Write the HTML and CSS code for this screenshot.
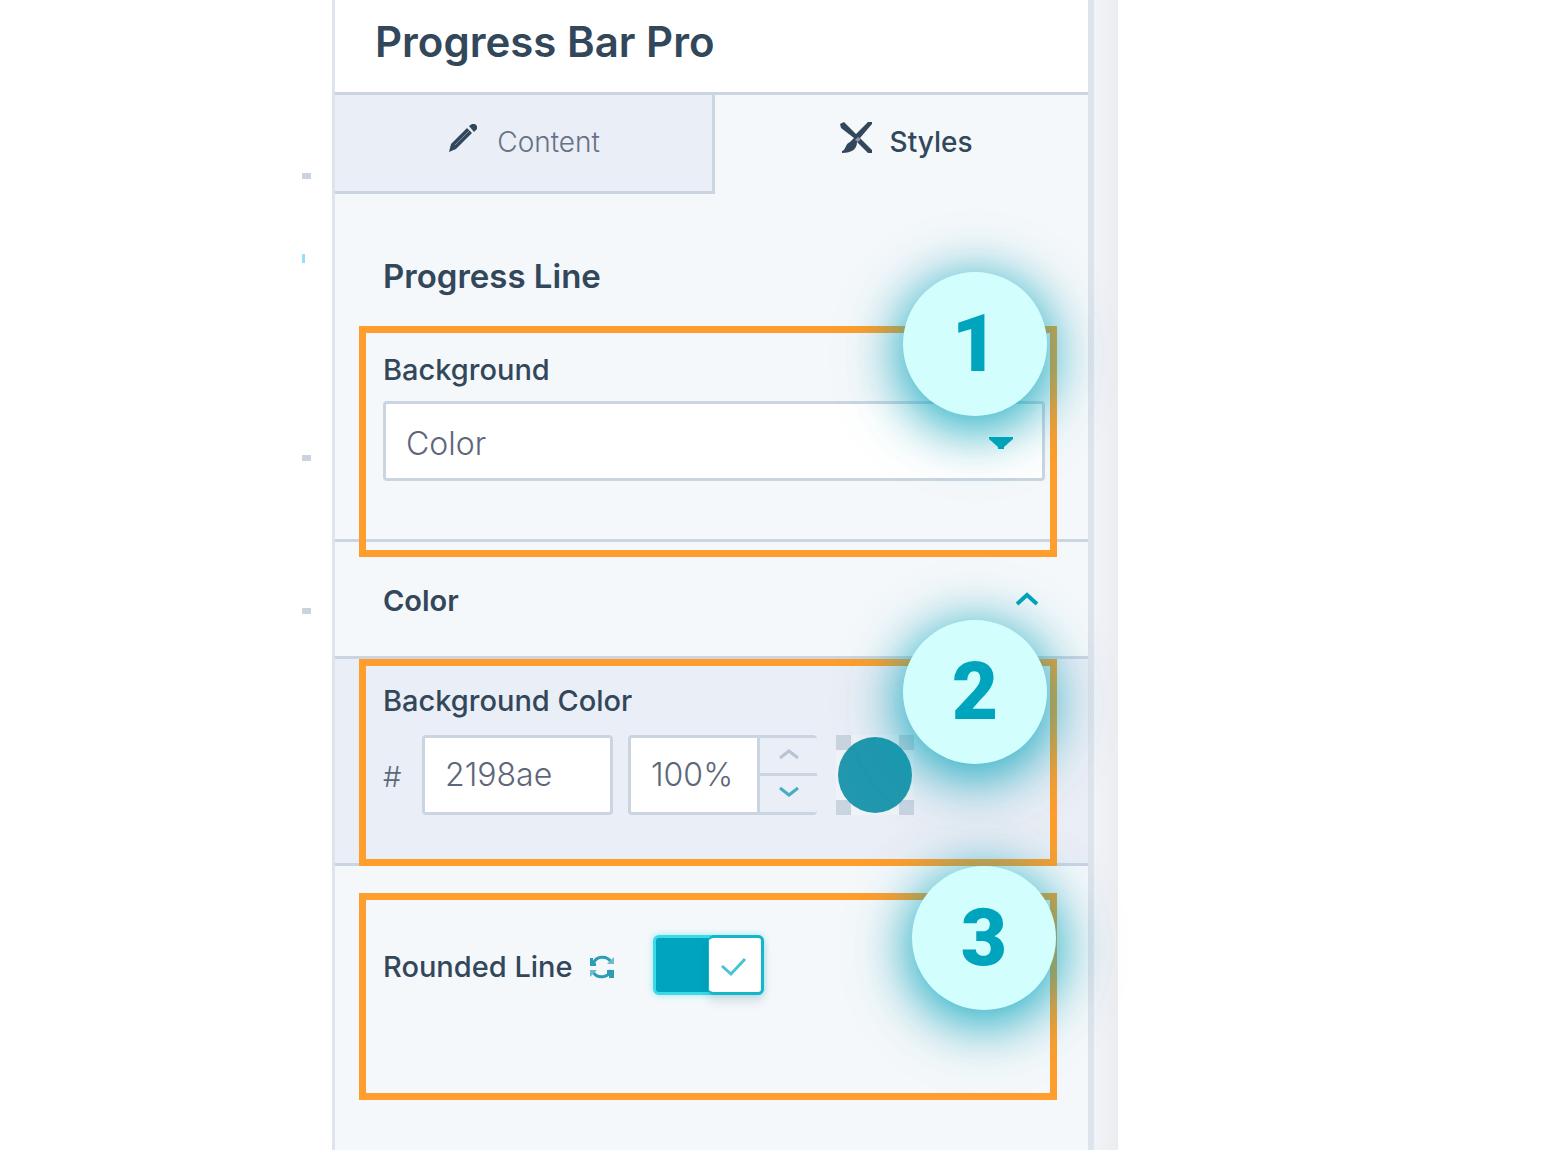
FILE: index.html
```html
<!DOCTYPE html>
<html lang="en">
<head>
    <meta charset="UTF-8">
    <meta name="viewport" content="width=device-width, initial-scale=1.0">
    <title>Progress Bar Pro</title>
    <link rel="stylesheet" href="styles.css">
</head>
<body>
    <div class="page">
        <div class="editor">
            <!-- Ruler marks -->
            <div class="ruler">
                <span class="tick"></span>
                <span class="marker"></span>
                <span class="tick tick-far"></span>
                <span class="tick tick-near"></span>
            </div>

            <main class="panel">
                <header class="panel-header">
                    <h1>Progress Bar Pro</h1>
                </header>

                <nav class="tabs">
                    <button class="tab" type="button">
                        <svg class="tab-icon" viewBox="0 0 32 32" aria-hidden="true">
                            <path d="M2 30l2-8L20 6l5 5L9 27z" fill="#33475b"/>
                            <path d="M22 4l3-2h3l2 2v3l-3 3z" fill="#33475b"/>
                            <path d="M8 23L22 9" stroke="#7d8ba6" stroke-width="1"/>
                        </svg>
                        Content
                    </button>
                    <button class="tab tab-active" type="button">
                        <svg class="tab-icon" viewBox="0 0 32 32" aria-hidden="true">
                            <path d="M0 2l4-2 12 12 12-12h4v2L20 16l12 12v3h-4L17 20c0 7-5 11-15 11v-2c4-1 3-7 8-9l4-4L1 6z" fill="#33475b"/>
                            <path d="M15 18l3-3 3 2-3 3z" fill="#8794ab"/>
                        </svg>
                        Styles
                    </button>
                </nav>

                <section class="group line-group">
                    <h2>Progress Line</h2>
                    <label class="label" for="background">Background</label>
                    <div class="select-wrap">
                        <select class="field" id="background">
                            <option>Color</option>
                        </select>
                        <svg class="caret" viewBox="0 0 24 12" aria-hidden="true">
                            <path d="M0 0h24v2l-9 8v2H9v-2L0 2z" fill="#00a4bd"/>
                        </svg>
                    </div>
                    <div class="highlight highlight-line"></div>
                    <div class="badge badge-line">1</div>
                </section>

                <section class="group color-head">
                    <h3>Color</h3>
                    <button class="collapse" type="button" aria-label="Collapse">
                        <svg viewBox="0 0 24 16" aria-hidden="true">
                            <path d="M2 13l10-9 10 9" fill="none" stroke="#00a4bd" stroke-width="4"/>
                        </svg>
                    </button>
                </section>

                <section class="group color-group">
                    <label class="label" for="hex">Background Color</label>
                    <div class="color-row">
                        <span class="hash">#</span>
                        <input class="field hex" id="hex" type="text" value="2198ae">
                        <div class="opacity">
                            <input class="field percent" type="text" value="100%" aria-label="Opacity">
                            <div class="stepper">
                                <button type="button" aria-label="Increase">
                                    <svg viewBox="0 0 20 12" aria-hidden="true">
                                        <path d="M1 10l9-7 9 7" fill="none" stroke="#b8c3d6" stroke-width="3"/>
                                    </svg>
                                </button>
                                <button type="button" aria-label="Decrease">
                                    <svg viewBox="0 0 20 12" aria-hidden="true">
                                        <path d="M1 2l9 7 9-7" fill="none" stroke="#45adc6" stroke-width="3"/>
                                    </svg>
                                </button>
                            </div>
                        </div>
                        <input class="swatch" type="color" value="#2198ae" aria-label="Pick a color">
                    </div>
                    <div class="highlight highlight-color"></div>
                    <div class="badge badge-color">2</div>
                </section>

                <section class="group rounded-group">
                    <label class="label" for="rounded">Rounded Line</label>
                    <button class="reset" type="button" aria-label="Reset">
                        <svg viewBox="0 0 26 26" aria-hidden="true">
                            <path d="M4 10a10 10 0 0 1 18-2M22 16a10 10 0 0 1-18 2" fill="none" stroke="#2d9db5" stroke-width="3"/>
                            <path d="M18 10h7V3z" fill="#6fb9cc"/>
                            <path d="M8 16H1v7z" fill="#6fb9cc"/>
                            <path d="M1 4h3v5h3v3H1zM25 24h-5v-3h-2v-5h7z" fill="#2d9db5"/>
                        </svg>
                    </button>
                    <div class="toggle">
                        <input class="toggle-input" id="rounded" type="checkbox" checked>
                        <svg class="toggle-knob" viewBox="0 0 52 54" aria-hidden="true">
                            <path d="M13 28l9 8 14-15" fill="none" stroke="#49c3d3" stroke-width="3"/>
                        </svg>
                    </div>
                    <div class="highlight highlight-rounded"></div>
                    <div class="badge badge-rounded">3</div>
                </section>
            </main>

            <div class="edge"></div>
        </div>
    </div>
</body>
</html>
```

FILE: styles.css
```css
/* General Styling */
* {
    box-sizing: border-box;
}

body {
    margin: 0;
    background-color: #ffffff;
    color: #33475b;
    font-family: Inter, "Open Sans", sans-serif;
}

h1, h2, h3 {
    margin: 0;
    font-weight: 600;
}

button {
    padding: 0;
    border: none;
    background: none;
    color: inherit;
    font: inherit;
    cursor: pointer;
}

svg {
    display: block;
}

/* Layout */
.page {
    display: grid;
    grid-template-columns: 302fr 816fr 442fr;
}

.editor {
    grid-column: 2;
    display: grid;
    grid-template-columns: 30px 1fr 24px;
}

.panel {
    border-left: 3px solid #dfe3ec;
    border-right: 6px solid #dfe3ec;
    background-color: #f4f8fb;
}

.edge {
    background: linear-gradient(to right, #f0f3f7, #ecedf1);
}

/* Ruler */
.ruler {
    display: flex;
    flex-direction: column;
    padding-top: 173px;
}

.tick {
    width: 9px;
    height: 6px;
    background-color: #cad4e1;
}

.tick-far {
    margin-top: 192px;
}

.tick-near {
    margin-top: 147px;
}

.marker {
    width: 3px;
    height: 9px;
    margin-top: 75px;
    background-color: #99dcfb;
}

/* Header and tabs */
.panel-header {
    padding: 18px 40px 26px;
    border-bottom: 3px solid #cbd5e2;
    background-color: #ffffff;
}

h1 {
    font-size: 42px;
    line-height: 48px;
}

.tabs {
    display: grid;
    grid-template-columns: 51fr 50fr;
}

.tab {
    display: flex;
    align-items: center;
    justify-content: center;
    gap: 18px;
    height: 99px;
    padding-bottom: 2px;
    border-right: 3px solid #cbd5e2;
    border-bottom: 3px solid #cbd5e2;
    background-color: #eaeef6;
    color: #667286;
    font-size: 28px;
    font-weight: 300;
}

.tab-active {
    padding-left: 12px;
    border-color: transparent;
    background: none;
    color: #33475b;
    font-weight: 500;
}

.tab-icon {
    width: 32px;
    height: 32px;
    margin-bottom: 8px;
}

/* Groups */
.group {
    position: relative;
    padding: 0 43px 0 48px;
    border-bottom: 3px solid #cbd5e2;
}

h2 {
    font-size: 33px;
    line-height: 40px;
}

h3 {
    padding-top: 4px;
    font-size: 29px;
    line-height: 36px;
}

.label {
    font-size: 29px;
    font-weight: 500;
    line-height: 36px;
}

.field {
    height: 80px;
    padding: 0 20px;
    border: 3px solid #cbd5e2;
    border-radius: 4px;
    background-color: #ffffff;
    color: #5d6778;
    font-family: inherit;
    font-size: 32px;
    font-weight: 300;
}

.line-group {
    padding-top: 62px;
    padding-bottom: 58px;
}

.line-group .label {
    display: block;
    margin: 56px 0 13px;
}

.select-wrap {
    position: relative;
}

.select-wrap .field {
    display: block;
    width: 100%;
    padding-top: 4px;
    appearance: none;
}

.caret {
    position: absolute;
    top: 36px;
    right: 32px;
    width: 24px;
    height: 12px;
    pointer-events: none;
}

.color-head {
    display: flex;
    align-items: center;
    justify-content: space-between;
    height: 117px;
    padding-right: 48px;
}

.collapse svg {
    width: 26px;
    height: 16px;
}

.color-group {
    padding-top: 24px;
    padding-bottom: 48px;
    background-color: #eaeef6;
}

.color-group .label {
    display: block;
    margin-bottom: 16px;
}

.color-row {
    display: flex;
    align-items: center;
}

.color-row .field {
    padding-bottom: 2px;
}

.hash {
    width: 39px;
    padding-top: 3px;
    color: #5d6778;
    font-size: 29px;
    font-weight: 300;
}

.hex {
    width: 191px;
    margin-right: 15px;
}

.opacity {
    display: flex;
    margin-right: 19px;
}

.percent {
    width: 132px;
    border-top-right-radius: 0;
    border-bottom-right-radius: 0;
}

.stepper {
    display: grid;
    grid-template-rows: 35px 1fr;
    width: 57px;
    border-top: 3px solid #cbd5e2;
    border-bottom: 3px solid #cbd5e2;
    border-radius: 0 4px 4px 0;
}

.stepper button {
    display: grid;
    place-items: center;
}

.stepper button + button {
    border-top: 3px solid #cbd5e2;
}

.stepper svg {
    width: 20px;
    height: 12px;
    margin-bottom: 4px;
}

.swatch {
    width: 78px;
    height: 80px;
    padding: 2px;
    border: none;
    appearance: none;
    background:
        linear-gradient(#cad4e1, #cad4e1) 0 0 / 15px 15px no-repeat,
        linear-gradient(#cad4e1, #cad4e1) 100% 0 / 15px 15px no-repeat,
        linear-gradient(#cad4e1, #cad4e1) 0 100% / 15px 15px no-repeat,
        linear-gradient(#cad4e1, #cad4e1) 100% 100% / 15px 15px no-repeat,
        #eff2f7;
}

.swatch::-webkit-color-swatch-wrapper {
    padding: 0;
}

.swatch::-webkit-color-swatch {
    border: none;
    border-radius: 50%;
}

.rounded-group {
    display: flex;
    align-items: center;
    height: 284px;
    padding-bottom: 86px;
    border-bottom: none;
}

.rounded-group .label {
    padding-top: 3px;
}

.reset {
    margin: 4px 38px 0 16px;
}

.reset svg {
    width: 26px;
    height: 26px;
}

/* Toggle */
.toggle {
    position: relative;
    width: 111px;
    height: 60px;
}

.toggle-input {
    display: block;
    width: 100%;
    height: 100%;
    margin: 0;
    border: 3px solid #3cd9e8;
    border-radius: 6px;
    appearance: none;
    background-color: #00a4bd;
    box-shadow: 0 0 6px rgba(60, 217, 232, 0.5);
}

.toggle-knob {
    position: absolute;
    top: 0;
    right: 0;
    width: 56px;
    height: 60px;
    border: 3px solid #17b5c9;
    border-left-width: 1px;
    border-radius: 6px;
    background-color: #ffffff;
    box-shadow: 0 8px 8px rgba(45, 62, 80, 0.1);
    pointer-events: none;
}

/* Callouts */
.highlight {
    position: absolute;
    left: 24px;
    right: 31px;
    z-index: 1;
    border: 7px solid #ff9e2c;
    pointer-events: none;
}

.highlight-line {
    top: 132px;
    bottom: -18px;
}

.highlight-color {
    top: 0;
    bottom: -3px;
}

.highlight-rounded {
    top: 27px;
    bottom: 50px;
}

.badge {
    position: absolute;
    right: 41px;
    z-index: 2;
    width: 144px;
    height: 144px;
    border-radius: 50%;
    background-color: #d2fffe;
    box-shadow: 0 10px 50px 6px rgba(0, 164, 189, 0.8), 0 12px 90px 10px rgba(0, 120, 120, 0.08);
    color: #00a4bd;
    font-family: Roboto, Inter, sans-serif;
    font-size: 80px;
    font-weight: 900;
    line-height: 144px;
    text-align: center;
}

.badge-line {
    top: 78px;
}

.badge-color {
    top: -39px;
}

.badge-rounded {
    top: 0;
    right: 32px;
}
```
